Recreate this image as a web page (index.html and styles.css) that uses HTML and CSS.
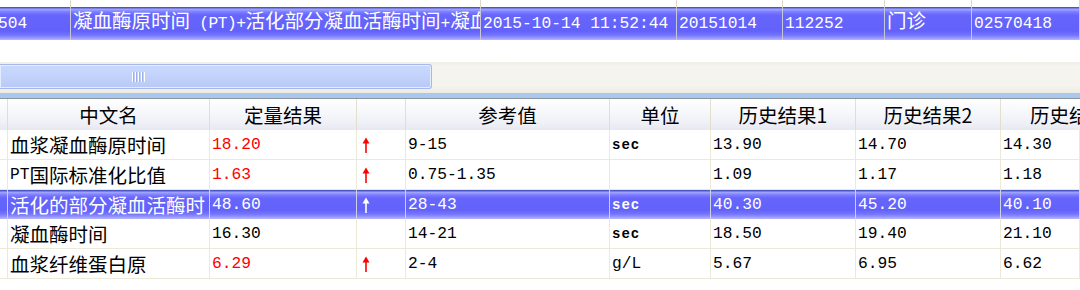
FILE: index.html
```html
<!DOCTYPE html>
<html>
<head>
<meta charset="utf-8">
<link rel="stylesheet" href="styles.css">
</head>
<body>
<div class="top">
  <div class="trow prev">
    <div class="tc"></div><div class="tc"></div><div class="tc"></div><div class="tc"></div><div class="tc"></div><div class="tc"></div><div class="tc"></div>
  </div>
  <div class="trow tsel">
    <div class="tc"><span class="lat cut">504</span></div>
    <div class="tc">凝血酶原时间<span class="lat tight"> (PT)+</span>活化部分凝血活酶时间<span class="lat">+</span>凝血</div>
    <div class="tc"><span class="lat">2015-10-14 11:52:44</span></div>
    <div class="tc"><span class="lat">20151014</span></div>
    <div class="tc"><span class="lat">112252</span></div>
    <div class="tc">门诊</div>
    <div class="tc"><span class="lat">02570418</span></div>
  </div>
</div>
<div class="gap"></div>
<div class="hscroll">
  <div class="thumb"><span class="grip"></span></div>
</div>
<div class="band"></div>
<div class="grid">
  <div class="row head">
    <div class="c"></div>
    <div class="c">中文名</div>
    <div class="c">定量结果</div>
    <div class="c"></div>
    <div class="c">参考值</div>
    <div class="c">单位</div>
    <div class="c">历史结果1</div>
    <div class="c">历史结果2</div>
    <div class="c last">历史结果3</div>
  </div>
  <div class="row">
    <div class="c"></div>
    <div class="c">血浆凝血酶原时间</div>
    <div class="c num red">18.20</div>
    <div class="c arr red"><svg viewBox="0 0 8 16" width="8" height="16"><path d="M4 3v13" stroke="currentColor" stroke-width="1.6"/><path d="M0.5 6.5L4 0.5L7.5 6.5Z" fill="currentColor"/></svg></div>
    <div class="c num">9-15</div>
    <div class="c num unit">sec</div>
    <div class="c num">13.90</div>
    <div class="c num">14.70</div>
    <div class="c num">14.30</div>
  </div>
  <div class="row">
    <div class="c"></div>
    <div class="c"><span class="lat">PT</span>国际标准化比值</div>
    <div class="c num red">1.63</div>
    <div class="c arr red"><svg viewBox="0 0 8 16" width="8" height="16"><path d="M4 3v13" stroke="currentColor" stroke-width="1.6"/><path d="M0.5 6.5L4 0.5L7.5 6.5Z" fill="currentColor"/></svg></div>
    <div class="c num">0.75-1.35</div>
    <div class="c num unit"></div>
    <div class="c num">1.09</div>
    <div class="c num">1.17</div>
    <div class="c num">1.18</div>
  </div>
  <div class="row sel">
    <div class="c"></div>
    <div class="c">活化的部分凝血活酶时</div>
    <div class="c num">48.60</div>
    <div class="c arr"><svg viewBox="0 0 8 16" width="8" height="16"><path d="M4 3v13" stroke="currentColor" stroke-width="1.6"/><path d="M0.5 6.5L4 0.5L7.5 6.5Z" fill="currentColor"/></svg></div>
    <div class="c num">28-43</div>
    <div class="c num unit">sec</div>
    <div class="c num">40.30</div>
    <div class="c num">45.20</div>
    <div class="c num">40.10</div>
  </div>
  <div class="row">
    <div class="c"></div>
    <div class="c">凝血酶时间</div>
    <div class="c num">16.30</div>
    <div class="c arr"></div>
    <div class="c num">14-21</div>
    <div class="c num unit">sec</div>
    <div class="c num">18.50</div>
    <div class="c num">19.40</div>
    <div class="c num">21.10</div>
  </div>
  <div class="row">
    <div class="c"></div>
    <div class="c">血浆纤维蛋白原</div>
    <div class="c num red">6.29</div>
    <div class="c arr red"><svg viewBox="0 0 8 16" width="8" height="16"><path d="M4 3v13" stroke="currentColor" stroke-width="1.6"/><path d="M0.5 6.5L4 0.5L7.5 6.5Z" fill="currentColor"/></svg></div>
    <div class="c num">2-4</div>
    <div class="c num">g/L</div>
    <div class="c num">5.67</div>
    <div class="c num">6.95</div>
    <div class="c num">6.62</div>
  </div>
</div>
</body>
</html>
```
FILE: styles.css
```css
html, body {
  margin: 0;
  padding: 0;
  background: #ffffff;
}
body {
  width: 1080px;
  height: 290px;
  overflow: hidden;
  font-family: "Noto Sans CJK SC", "Noto Sans", sans-serif;
  font-size: 19.5px;
  color: #000;
}
.lat, .num {
  font-family: "Liberation Mono", "DejaVu Sans Mono", monospace;
  font-size: 16.25px;
}
.tight {
  letter-spacing: -0.5px;
}

/* top list */
.trow {
  display: grid;
  grid-template-columns: 71px 410px 196px 106px 102px 87px 108px;
}
.tc {
  box-sizing: border-box;
  border-right: 1px solid #dcd9cc;
  white-space: pre;
  overflow: hidden;
  padding-left: 2px;
}
.prev {
  height: 7px;
}
.tsel {
  height: 33px;
  color: #ffffff;
  background: linear-gradient(to bottom, #4a58c4 0px, #4a58c4 1px, #a4a8ff 2px, #7c7cff 5px, #6666fd 8px, #6262fa 24px, #7474ff 28px, #9898ff 31px, #b8b8ff 33px);
}
.tsel .tc {
  border-right-color: #c8c8dc;
  height: 33px;
  line-height: 26px;
}
.cut {
  margin-left: -4px;
}
.gap {
  height: 22px;
}

/* horizontal scrollbar */
.hscroll {
  height: 31px;
  box-sizing: border-box;
  padding-top: 2px;
  background: linear-gradient(to bottom, #eeede6 0px, #f5f4ef 4px, #f4f3ee 24px, #eceae2 31px);
}
.thumb {
  width: 432px;
  height: 25px;
  box-sizing: border-box;
  border: 1px solid #a6b8ec;
  border-left: none;
  border-radius: 0 3px 3px 0;
  box-shadow: inset 0 0 0 1px #e4ecff;
  background: linear-gradient(to bottom, #cbd8fd 0%, #c2d2fb 50%, #b8c9f6 100%);
  display: flex;
  align-items: center;
  padding-left: 132px;
}
.grip {
  width: 13px;
  height: 10px;
  background: repeating-linear-gradient(to right, #ffffff 0px, #ffffff 1px, #9cb0ea 1px, #9cb0ea 2px, transparent 2px, transparent 3px);
}
.band {
  height: 6px;
  box-sizing: border-box;
  background: #a9c8ee;
  border-bottom: 1px solid #8c949e;
}

/* main grid */
.row {
  display: grid;
  grid-template-columns: 8px 202px 147px 49px 204px 101px 145px 145px 79px;
  height: 30px;
  box-sizing: border-box;
  border-bottom: 1px solid #ece9d8;
}
.c {
  box-sizing: border-box;
  border-right: 1px solid #ece9d8;
  white-space: nowrap;
  overflow: hidden;
  display: flex;
  align-items: center;
  padding-left: 2px;
}
.head {
  height: 31px;
  border-bottom: none;
  background: linear-gradient(to bottom, #ffffff 0%, #f7f8fb 40%, #eff0f6 80%, #e6e8f0 100%);
}
.head .c {
  justify-content: center;
  padding-left: 0;
  border-right-color: #e2dfcf;
}
.head .last {
  justify-content: flex-start;
  padding-left: 29px;
  border-right: none;
}
.red {
  color: #ff0000;
}
.arr {
  padding-left: 5px;
  padding-top: 1px;
}
.unit {
  font-weight: bold;
  font-size: 14px;
  letter-spacing: 1px;
}
.sel {
  height: 29px;
  color: #ffffff;
  border-bottom: none;
  background: linear-gradient(to bottom, #4a58c4 0px, #4a58c4 1px, #a4a8ff 2px, #7c7cff 5px, #6666fd 8px, #6262fa 20px, #7474ff 24px, #9898ff 27px, #b8b8ff 29px);
}
.sel .c {
  border-right-color: #d0d0e4;
}
```
